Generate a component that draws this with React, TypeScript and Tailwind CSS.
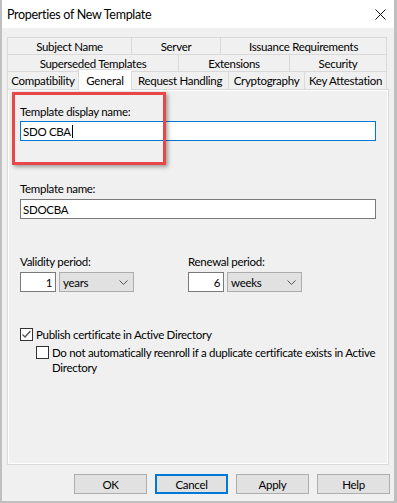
import React from "react";

const font = { fontFamily: 'Lato, "Liberation Sans", sans-serif' };

const Tab = ({ label, w, active = false, last = false }: { label: string; w: number; active?: boolean; last?: boolean }) => (
  <div
    className={
      "flex items-center justify-center whitespace-nowrap border-t border-l border-[#d9d9d9] " +
      (last ? "border-r " : "") +
      (active ? "relative z-10 -mt-[2px] -mb-px h-[21px] bg-white" : "h-full bg-[#f0f0f0]")
    }
    style={{ width: w }}
  >
    {label}
  </div>
);

const Chevron = () => (
  <svg width="9" height="5" viewBox="0 0 9 5" className="ml-auto mr-[5px]">
    <path d="M0.5 0.5 L4.5 4.5 L8.5 0.5" fill="none" stroke="#555" strokeWidth="1" />
  </svg>
);

const NumBox = ({ value, w }: { value: string; w: number }) => (
  <div
    className="flex h-[20px] items-center justify-end border border-[#7a7a7a] bg-white pr-[3px]"
    style={{ width: w }}
  >
    {value}
  </div>
);

const Select = ({ value }: { value: string }) => (
  <div className="ml-[3px] flex h-[20px] w-[75px] items-center border border-[#adadad] bg-[#e1e1e1] pl-[3px]">
    {value}
    <Chevron />
  </div>
);

const CheckBox = ({ checked }: { checked?: boolean }) => (
  <div className="flex h-[13px] w-[13px] shrink-0 items-center justify-center border border-[#333] bg-white">
    {checked && (
      <svg width="11" height="11" viewBox="0 0 11 11">
        <path d="M1.5 5.5 L4 8 L9.5 2" fill="none" stroke="#555" strokeWidth="1.3" />
      </svg>
    )}
  </div>
);

const Button = ({ label, focused }: { label: string; focused?: boolean }) => (
  <div
    className={
      "flex h-[20px] w-[73px] items-center justify-center bg-[#e1e1e1] " +
      (focused ? "border-2 border-[#0078d7]" : "border border-[#adadad]")
    }
  >
    {label}
  </div>
);

export default function App() {
  return (
    <div
      className="relative flex h-[503px] w-[397px] flex-col border-b-2 border-l-2 border-r-[3px] border-[#bfbfbf] bg-[#f0f0f0] text-[11.5px] leading-[15px] tracking-[-0.3px] text-black"
      style={font}
    >
      {/* title bar */}
      <div className="flex h-[28px] shrink-0 items-center bg-white pl-[5px] pr-[8px] text-[12.5px]">
        <span>Properties of New Template</span>
        <svg width="11" height="11" viewBox="0 0 11 11" className="ml-auto">
          <path d="M0.5 0.5 L10.5 10.5 M10.5 0.5 L0.5 10.5" stroke="#111" strokeWidth="1" />
        </svg>
      </div>

      {/* tabs */}
      <div className="ml-[5px] mt-[9px] w-[380px]">
        <div className="flex h-[17px]">
          <Tab label="Subject Name" w={124} />
          <Tab label="Server" w={89} />
          <Tab label="Issuance Requirements" w={167} last />
        </div>
        <div className="flex h-[17px]">
          <Tab label="Superseded Templates" w={171} />
          <Tab label="Extensions" w={111} />
          <Tab label="Security" w={98} last />
        </div>
        <div className="flex h-[18px] items-end">
          <Tab label="Compatibility" w={71} />
          <Tab label="General" w={53} active />
          <Tab label="Request Handling" w={97} />
          <Tab label="Cryptography" w={76} />
          <Tab label="Key Attestation" w={83} last />
        </div>
      </div>

      {/* panel */}
      <div className="ml-[5px] h-[376px] w-[382px] border border-[#d9d9d9]">
        <div className="flex h-full flex-col border border-white px-[11px] pt-[13px]">
          <div>Template display name:</div>
          <div className="mt-[2px] flex h-[20px] w-[356px] items-center border border-[#0078d7] bg-white pl-[2px]">
            SDO CBA
            <span className="ml-px inline-block h-[13px] w-px bg-black" />
          </div>

          <div className="mt-[40px]">Template name:</div>
          <div className="mt-[3px] flex h-[20px] w-[356px] items-center border border-[#7a7a7a] bg-white pl-[2px]">
            SDOCBA
          </div>

          <div className="mt-[35px] flex">
            <div className="w-[168px]">
              <div>Validity period:</div>
              <div className="mt-[3px] flex">
                <NumBox value="1" w={36} />
                <Select value="years" />
              </div>
            </div>
            <div>
              <div>Renewal period:</div>
              <div className="mt-[3px] flex">
                <NumBox value="6" w={36} />
                <Select value="weeks" />
              </div>
            </div>
          </div>

          <div className="mt-[35px] flex items-center gap-[3px]">
            <CheckBox checked />
            <span>Publish certificate in Active Directory</span>
          </div>
          <div className="mt-[3px] flex items-start gap-[3px] pl-[16px]">
            <div className="mt-[1px]">
              <CheckBox />
            </div>
            <span className="whitespace-nowrap">
              Do not automatically reenroll if a duplicate certificate exists in Active
              <br />
              Directory
            </span>
          </div>
        </div>
      </div>

      {/* buttons */}
      <div className="mt-[9px] flex justify-end gap-[8px] pr-[4px]">
        <Button label="OK" />
        <Button label="Cancel" focused />
        <Button label="Apply" />
        <Button label="Help" />
      </div>

      {/* red highlight */}
      <div className="absolute left-[10px] top-[92px] h-[73px] w-[154px] border-[3px] border-[#e8474a] shadow-[2px_2px_4px_rgba(0,0,0,0.35)]" />
    </div>
  );
}
